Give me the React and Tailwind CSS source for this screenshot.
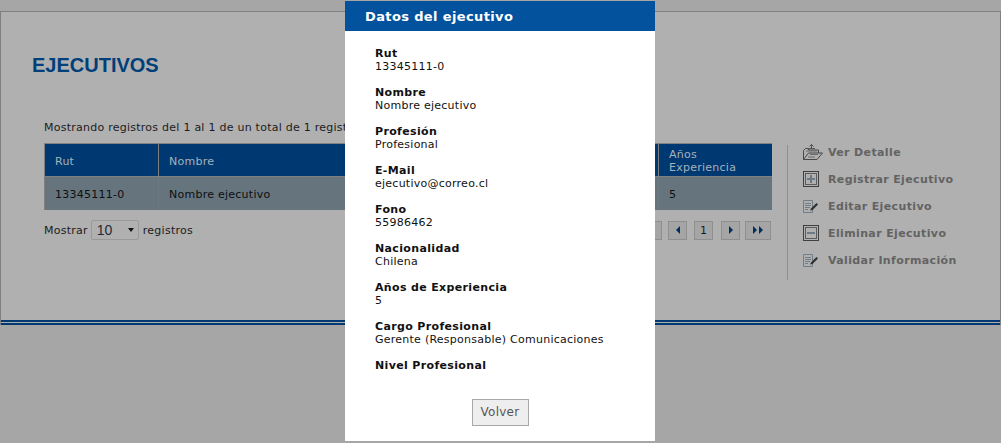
const F = "font-['DejaVu_Sans',Verdana,sans-serif]";

const Folder = () => (
  <svg width="20" height="16" viewBox="0 0 20 16" fill="none" stroke="#474747" strokeWidth="1">
    <path d="M8.500 0v4M6.500 2.500l2-2 2 2M6 4.500h6" stroke="#555" />
    <path d="M0.500 15.500v-9l2-2h3v1.500h10v3" />
    <path d="M0.500 15.500h13.500l5.500-6.500h-14l-5 6.500z" fill="#b0b0b0" />
    <path d="M3 7h11M7 10.500h8M5 13h7" stroke="#6a6a6a" />
  </svg>
);
const BoxIcon = ({ plus }) => (
  <svg width="16" height="16" viewBox="0 0 16 16" fill="none">
    <rect x="0.500" y="0.500" width="15" height="15" stroke="#3f3f3f" />
    <rect x="2.500" y="2.500" width="11" height="11" stroke="#5c5c5c" />
    <path d={plus ? "M4 8h8M8 4v8" : "M4 8h8"} stroke="#6b7a85" strokeWidth="2" />
  </svg>
);
const Note = () => (
  <svg width="16" height="13" viewBox="0 0 16 13" fill="none">
    <path d="M0.500 0.500h9v12h-9z" stroke="#707d86" />
    <path d="M2 3.500h6M2 5.500h6M2 7.500h5M2 9.500h3" stroke="#707d86" />
    <path d="M7 10.500l1-2 5.500-5.500 1.500 1.500-5.500 5.500z" fill="#2e2e2e" />
  </svg>
);

const actions = [
  [<Folder />, "Ver Detalle"],
  [<BoxIcon plus />, "Registrar Ejecutivo"],
  [<Note />, "Editar Ejecutivo"],
  [<BoxIcon />, "Eliminar Ejecutivo"],
  [<Note />, "Validar Información"],
];

const fields = [
  ["Rut", "13345111-0"],
  ["Nombre", "Nombre ejecutivo"],
  ["Profesión", "Profesional"],
  ["E-Mail", "ejecutivo@correo.cl"],
  ["Fono", "55986462"],
  ["Nacionalidad", "Chilena"],
  ["Años de Experiencia", "5"],
  ["Cargo Profesional", "Gerente (Responsable) Comunicaciones"],
  ["Nivel Profesional", ""],
];

const PageBtn = ({ className = "", children }) => (
  <div className={`h-[19px] border border-[#8f8f8f] bg-[#a5a5a5] flex items-center justify-center gap-[2px] text-[#1a1a1a] ${className}`}>{children}</div>
);
const L = () => <span className="w-0 h-0 border-y-[4px] border-y-transparent border-r-[4px] border-r-[#002f5f]" />;
const R = () => <span className="w-0 h-0 border-y-[4px] border-y-transparent border-l-[4px] border-l-[#002f5f]" />;

export default function App() {
  return (
    <div className={`${F} relative w-[1001px] h-[443px] overflow-hidden bg-[#a6a6a6] text-[11px] leading-[13px] tracking-[0.25px] text-[#1c1c1c]`}>
      <div className="pt-[11px]">
        <div className="h-[314px] bg-[#b0b0b0] border-t border-x border-[#808080] flex flex-col">
          <h1 className="font-['Liberation_Sans',Arial,sans-serif] font-bold text-[20px] leading-[23px] tracking-normal text-[#003f7a] pl-[31px] pt-[42px]">EJECUTIVOS</h1>
          <div className="flex flex-1 pl-[43px] pt-[44px]">
            <div className="w-[728px]">
              <p className="h-[13px] mb-[9px] whitespace-nowrap">Mostrando registros del 1 al 1 de un total de 1 registros</p>
              <div className="border-l border-t border-[#808080]">
                <div className="flex h-[33px] bg-[#003871] text-[#a6b1bc] border-b border-[#808080]">
                  <div className="w-[114px] pl-[10px] pt-[2px] flex items-center border-r border-[#808080]">Rut</div>
                  <div className="flex-1 pl-[10px] pt-[2px] flex items-center border-r border-[#808080]">Nombre</div>
                  <div className="w-[113px] pl-[10px] pt-px flex items-center">Años<br />Experiencia</div>
                </div>
                <div className="flex h-[33px] bg-[#66757d] text-[#0e0e10]">
                  <div className="w-[114px] pl-[10px] pt-px flex items-center border-r border-[#6f7a80]">13345111-0</div>
                  <div className="flex-1 pl-[10px] pt-px flex items-center border-r border-[#6f7a80]">Nombre ejecutivo</div>
                  <div className="w-[113px] pl-[10px] pt-px flex items-center">5</div>
                </div>
              </div>
              <div className="flex items-center justify-between mt-[10px]">
                <div className="flex items-center">
                  <span className="pt-px">Mostrar</span>
                  <div className="ml-[3px] mr-[4px] w-[48px] h-[20px] border border-[#999] rounded-[2px] flex items-center justify-between pl-[5px] pr-[4px] font-['Liberation_Sans',Arial,sans-serif] tracking-normal text-[#1c2a38] text-[14px]">
                    <span>10</span>
                    <span className="w-0 h-0 border-x-[3px] border-x-transparent border-t-[4px] border-t-[#111]" />
                  </div>
                  <span className="pt-px">registros</span>
                </div>
                <div className="flex pr-px">
                  <PageBtn className="w-[26px] mr-[6px]"><L /><L /></PageBtn>
                  <PageBtn className="w-[19px] mr-[7px]"><L /></PageBtn>
                  <PageBtn className="w-[19px] mr-[8px]">1</PageBtn>
                  <PageBtn className="w-[19px] mr-[5px]"><R /></PageBtn>
                  <PageBtn className="w-[26px]"><R /><R /></PageBtn>
                </div>
              </div>
            </div>
            <div className="ml-[15px] mt-[24px] h-[135px] border-l border-[#8f8f8f] pl-[15px] flex flex-col gap-[13px]">
              {actions.map(([icon, label], i) => (
                <div key={i} className="flex items-center h-[14px]">
                  <span className="w-[25px] flex items-center">{icon}</span>
                  <span className="font-bold tracking-[0.37px] text-[#636363] whitespace-nowrap">{label}</span>
                </div>
              ))}
            </div>
          </div>
          <div className="border-y-2 border-[#003871] h-[5px]" />
        </div>
      </div>

      <div className="absolute left-[345px] top-px w-[310px] h-[440px] bg-white flex flex-col">
        <div className="h-[30px] bg-[#02529e] text-white font-bold text-[13px] tracking-[0.37px] flex items-center pl-[20px]">Datos del ejecutivo</div>
        <div className="pl-[30px] pt-[16px] flex flex-col gap-[13px] text-[#111]">
          {fields.map(([k, v]) => (
            <div key={k} className="h-[26px]">
              <div className="font-bold tracking-[0.35px]">{k}</div>
              <div>{v}</div>
            </div>
          ))}
        </div>
        <button className="self-center mt-[14px] w-[57px] h-[27px] bg-[#eeeeee] border border-[#a8a8a8] text-[12px] text-[#555]">Volver</button>
      </div>
    </div>
  );
}
